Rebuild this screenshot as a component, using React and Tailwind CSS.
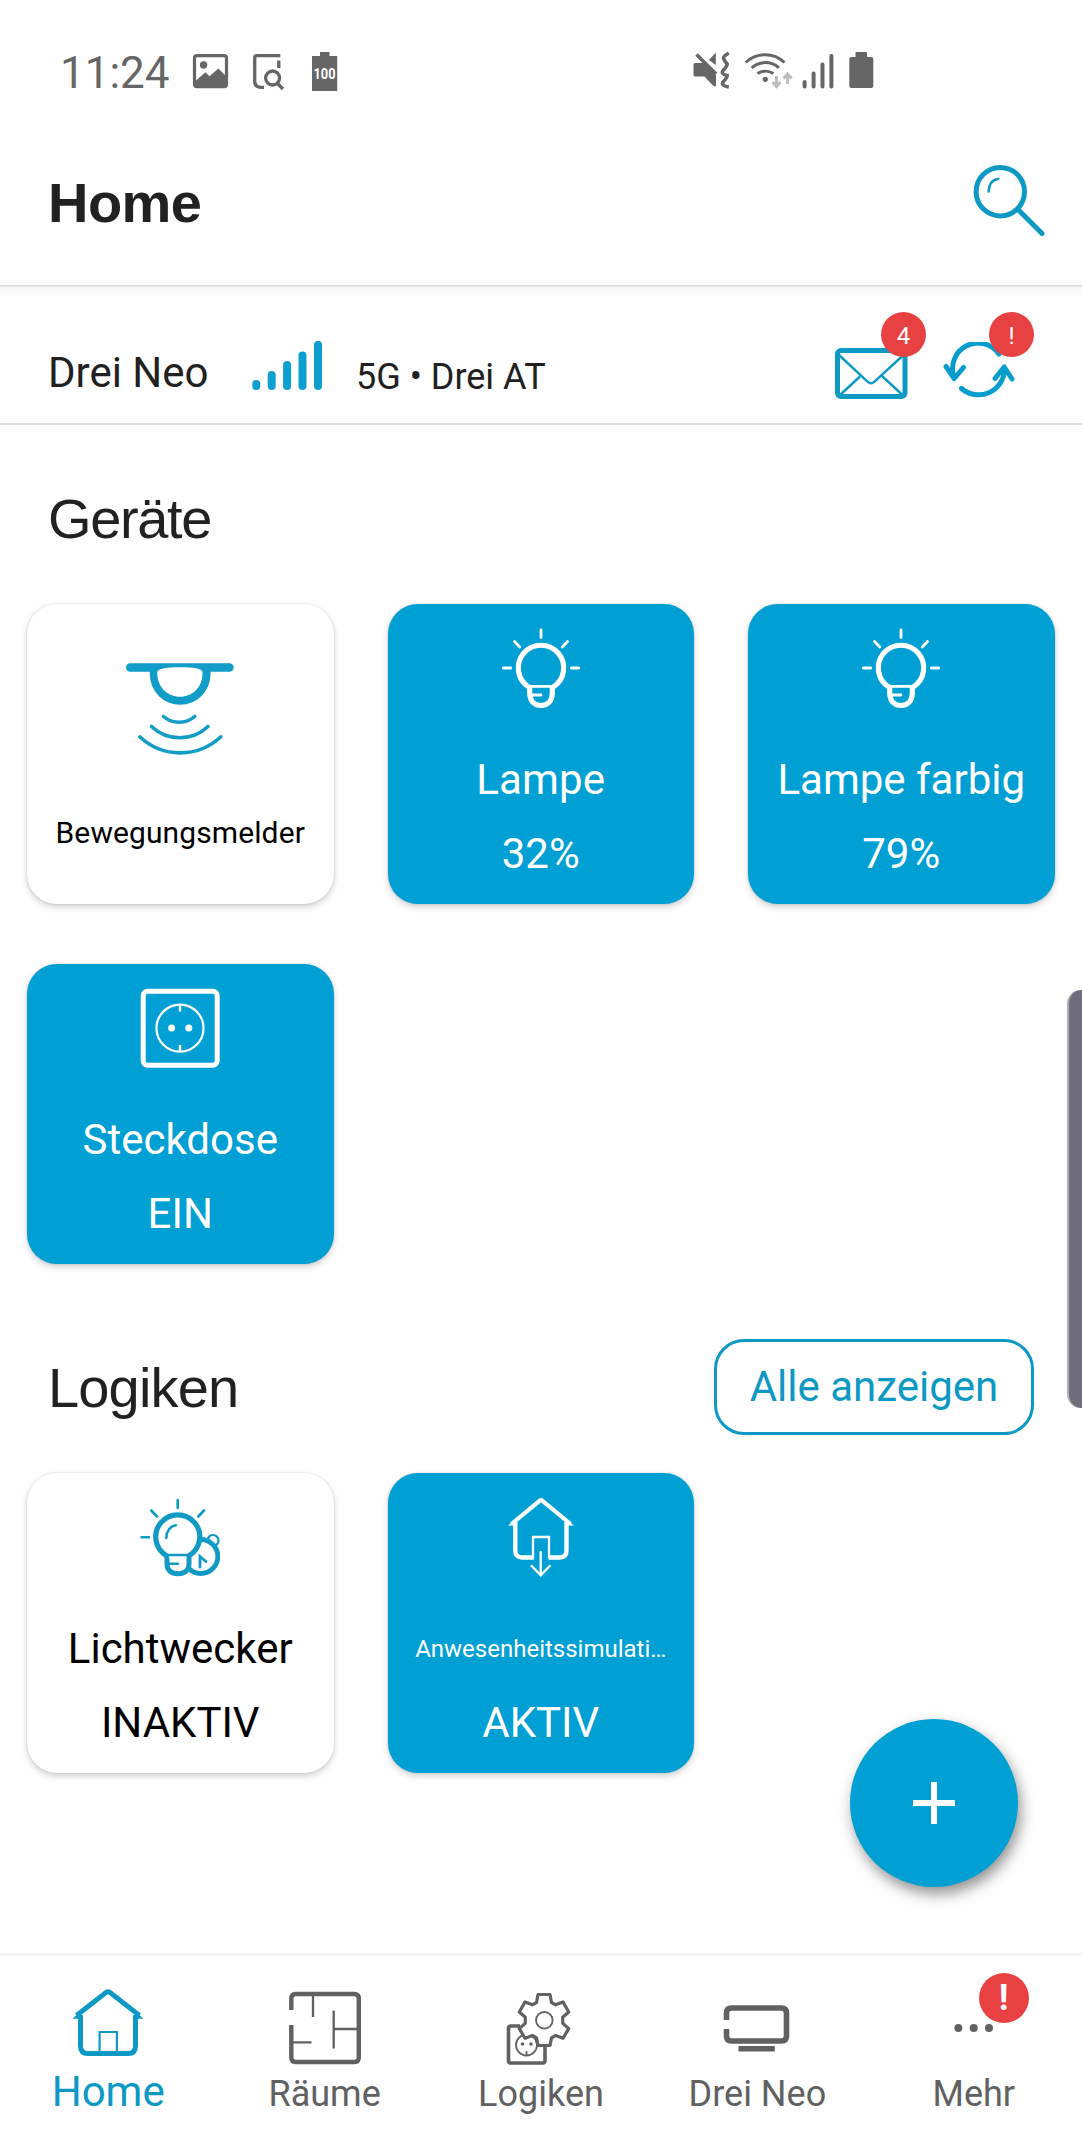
import clsx from 'clsx'

function StatusBar() {
  return (
    <div className="flex h-[142px] shrink-0 items-center pl-[60px] text-[#666]">
      <span className="w-[132px] pt-[4px] text-[44px] leading-[60px]">11:24</span>
      <svg className="mr-[22px] h-10 w-[38px]" viewBox="192 51 38 40">
        <rect x="194.5" y="55.7" width="32" height="31" rx="2.5" fill="none" stroke="currentColor" strokeWidth="3.2" />
        <circle cx="203.6" cy="65" r="3.7" fill="currentColor" />
        <path d="M195 81.5 205.3 72.3 209.5 76.3 218.4 68.5 227 77V87H195z" fill="currentColor" />
      </svg>
      <svg className="mr-[25px] h-10 w-[34px]" viewBox="252 51 34 40" fill="none" stroke="currentColor" strokeWidth="3.3">
        <path d="M280.3 55.6H257q-2.3 0-2.3 2.3V81q0 6.4 6.4 6.4H264" />
        <path d="M278.8 60.5V68M276.5 82.5 283 89" />
        <circle cx="272.6" cy="78" r="7" />
      </svg>
      <svg className="h-[42px] w-7" viewBox="311 50 28 42">
        <path d="M320 52h9.5v4h7.7v35H312V56h8z" fill="currentColor" />
        <text x="313.5" y="79" textLength="22" lengthAdjust="spacingAndGlyphs" fontSize="15" fontWeight="700" fill="#fff">100</text>
      </svg>
      <svg className="ml-[354px] mr-[13px] h-10 w-[38px]" viewBox="693 51 38 40">
        <path d="M695 63h9l12 12v11.5q-2.5 0-4-2L704.5 76.500H695q-1.500 0-1.500-1.500V64.500q0-1.500 1.500-1.500zM709 60l6.800-7.500V65z" fill="currentColor" />
        <path d="M696.500 54.500 716 74M728.800 53q-6 3.500-5.300 5.500t3.700 5.500q0 2-3.700 6t3.700 5.500q0 2-3.700 6t5.300 5.500" fill="none" stroke="currentColor" strokeWidth="3.500" />
      </svg>
      <svg className="mr-[7px] h-10 w-[50px]" viewBox="744 51 50 40" fill="none" stroke="currentColor" strokeWidth="3">
        <path d="M745.700 62.500A28 28 0 0 1 784.500 62.500M751.700 67.800A20.500 20.500 0 0 1 779 67.800M757.500 73.500A14.500 14.500 0 0 1 773.400 73.500" />
        <circle cx="765.300" cy="79.300" r="2.600" fill="currentColor" stroke="none" />
        <path d="M776.500 76v10M772.500 82l4 4.500 4-4.500M787.600 84V74M783.600 78.500l4-4.500 4 4.500" stroke="#bdbdbd" />
      </svg>
      <svg className="mr-[13px] h-10 w-[34px]" viewBox="801 51 34 40" stroke="currentColor" strokeWidth="4" strokeLinecap="round">
        <path d="M804.600 82v4.500M813.600 73.500v13M822.500 64.500v22M831.400 56v30.500" />
      </svg>
      <svg className="h-10 w-[26px]" viewBox="848 51 26 40" fill="currentColor">
        <rect x="855.500" y="52" width="11.500" height="8" rx="1" />
        <rect x="849.300" y="57" width="24" height="31" rx="2" />
      </svg>
    </div>
  )
}

function Header() {
  return (
    <header className="flex h-[143px] shrink-0 items-start justify-between pl-12 pr-[34px]">
      <h1 className="mt-[29px] font-['Liberation_Sans',sans-serif] text-[56px] font-bold leading-[64px] tracking-[-0.01em] text-[#212121]">Home</h1>
      <svg className="mt-5 size-[78px]" viewBox="970 162 78 78" fill="none" stroke="#0d99c4" strokeLinecap="round">
        <circle cx="1000.300" cy="191.700" r="24.200" strokeWidth="5" />
        <path d="M1018.500 210 1042 233.500" strokeWidth="5" />
        <path d="M988.700 191.500q.5-11.500 9.500-12.500" strokeWidth="2.600" />
      </svg>
    </header>
  )
}

function CountBadge({ className, children }) {
  return (
    <span
      className={clsx(
        'absolute right-[-18px] flex size-[45px] items-center justify-center rounded-full bg-[#e84142] pt-0.5 text-[24px] leading-none text-white',
        className
      )}
    >
      {children}
    </span>
  )
}

function DeviceRow() {
  return (
    <section className="flex h-[140px] shrink-0 items-start border-b-2 border-[#dcdcdc] bg-linear-to-b from-[#dedede] from-[1px] via-[#f5f5f5] via-[2px] to-[#fefefe] to-[11px] pl-12 text-[#212121]">
      <span className="mt-[63px] w-[203px] text-[42px] leading-[50px]">Drei Neo</span>
      <svg className="mt-[55px] h-[52px] w-[72px]" viewBox="250 339 72 52" stroke="#0d9fd0" strokeWidth="8" strokeLinecap="round">
        <path d="M255.300 383v2M270.700 374v11M286.100 364v21M301.500 354.500v30.500M317 344v41" />
      </svg>
      <span className="ml-[33px] mt-[67px] w-[478px] text-[36px] leading-[50px]">5G • Drei AT</span>
      <div className="relative mt-[61.5px]">
        <svg className="h-[54px] w-[74px]" viewBox="833.500 346 74 54" fill="none" stroke="#0d99c4">
          <rect x="837" y="349.500" width="67.500" height="46" rx="3.500" strokeWidth="5" />
          <path d="M838.500 354 867 380.500q3.500 3.500 7 0L903 354M839.500 394l20-18.500M902 394l-20.500-19" strokeWidth="2.400" />
        </svg>
        <CountBadge className="-top-[34.500px]">4</CountBadge>
      </div>
      <div className="relative ml-[34px] mt-[57px]">
        <svg className="h-[58px] w-[74px]" viewBox="941.500 342 74 58" fill="none" stroke="#069dce" strokeWidth="5" strokeLinecap="round" strokeLinejoin="round">
          <path d="M998.500 354A25.500 25.500 0 0 0 953.500 377M945.500 366.500 953.700 378.500 963 367.500M961 388.500A26 26 0 0 0 1004 370M994.500 378.500 1003.700 367 1011.500 379" />
        </svg>
        <CountBadge className="-top-[30px]">!</CountBadge>
      </div>
    </section>
  )
}

function MotionIcon() {
  return (
    <svg className="h-[94px] w-[110px]" viewBox="125 662.500 110 94" fill="none" stroke="#119dc8" strokeLinecap="round">
      <path d="M130.200 668H229.500" strokeWidth="8.300" />
      <path d="M149.800 669v6a30.300 30.300 0 0 0 60.700 0v-6z" fill="#119dc8" stroke="none" />
      <path d="M157.300 672.500C158 669 167 667.800 180 667.800s22 1.200 22.500 4.700C203 688 192 697.300 180 697.300S156.800 688 157.300 672.500z" fill="#fff" stroke="none" />
      <path d="M163.500 717a24 24 0 0 0 31.200 0M151.500 727a41 41 0 0 0 56.500 0M139.800 737.300a59 59 0 0 0 81 0" strokeWidth="3.600" />
    </svg>
  )
}

function BulbIcon() {
  return (
    <svg className="size-20" viewBox="-40 0 80 80" fill="none" stroke="#fff" strokeWidth="5.200" strokeLinecap="round">
      <path d="M-11.500 59.500A22.700 22.700 0 1 1 11.500 59.500" />
      <path d="M-11.300 60v5c0 8.500 5 12.500 11.300 12.500s11.300-4 11.300-12.500v-5" />
      <path d="M-12 58.300H12M-11 67H0M0 2v7.500M-26.500 13.500l5.300 5.500M26.500 13.500l-5.300 5.500" strokeWidth="2.800" />
      <path d="M-37.500 40h7M37.500 40h-7" strokeWidth="3.200" />
    </svg>
  )
}

function SocketIcon() {
  return (
    <svg className="size-20" viewBox="0 0 80 80" fill="none" stroke="#fff">
      <rect x="3.200" y="3.200" width="74" height="74" rx="4.500" strokeWidth="5" />
      <circle cx="40" cy="40.200" r="23.500" strokeWidth="2.200" />
      <path d="M40 17v6.500M40 57v6.500" strokeWidth="2.400" />
      <circle cx="31.600" cy="40" r="3.500" fill="#fff" stroke="none" />
      <circle cx="48.800" cy="40" r="3.500" fill="#fff" stroke="none" />
    </svg>
  )
}

function LightAlarmIcon() {
  return (
    <svg className="size-20" viewBox="0 0 80 80" fill="none" stroke="#119ac3" strokeLinecap="round">
      <circle cx="73" cy="43.500" r="5.500" strokeWidth="2.200" />
      <circle cx="60.800" cy="59.500" r="17" fill="#fff" strokeWidth="4.800" />
      <path d="M60 70V59.500l6 5" strokeWidth="2.800" />
      <path d="M27 57.500v9.500c0 6.500 4.500 9.700 11 9.700s11-3.200 11-9.700v-9.500" fill="#fff" strokeWidth="5" />
      <circle cx="37.700" cy="40.300" r="22" fill="#fff" stroke="none" />
      <path d="M26.500 58.700a22 22 0 1 1 22.500 0" strokeWidth="5.200" />
      <path d="M27 58H49M29 66.700h9M26.300 41q.5-11 9.500-12.700M37.700 3v8M11.300 13.500l5.700 6M64 13.500l-5.700 6M1.500 40.300h7.500" strokeWidth="2.600" />
    </svg>
  )
}

function PresenceIcon() {
  return (
    <svg className="size-20" viewBox="0 0 80 80" fill="none" stroke="#fff">
      <path d="M10.500 27 38.500 3.800q1.500-1.200 3 0L69.500 27" strokeWidth="4.200" />
      <path d="M7 28.500 14 23v5.500zM73 28.500 66 23v5.500z" fill="#fff" stroke="none" />
      <path d="M14.300 25v28.500q0 7 7 7h11.500M65.500 25v28.500q0 7-7 7H47.500" strokeWidth="4.400" />
      <path d="M32 61V40h16v21M39.700 54v24M30 68.300l9.700 10 9.700-10" strokeWidth="2.300" />
    </svg>
  )
}

function Tile({ icon, name, state, active, nameClass }) {
  return (
    <div
      className={clsx(
        'flex h-[300px] flex-col items-center rounded-[30px] pt-6 text-[42px] leading-[50px]',
        'shadow-[0_0_2px_rgba(0,0,0,0.14),0_3px_6px_rgba(0,0,0,0.18)]',
        active ? 'bg-[#01a0d4] text-white' : 'bg-white text-black'
      )}
    >
      {icon}
      <span className={clsx('mt-[47px] whitespace-nowrap', nameClass)}>{name}</span>
      <span className="mt-6">{state}</span>
    </div>
  )
}

function NavItem({ label, active, viewBox, children, badge }) {
  return (
    <div className={clsx('relative flex flex-col items-center', active ? 'text-[#0d99c4]' : 'text-[#616161]')}>
      <svg className="h-[86px] w-[100px]" viewBox={viewBox} fill="none" stroke="currentColor">
        {children}
      </svg>
      <span className={clsx('leading-[50px]', active ? 'mt-px text-[42px]' : 'mt-[3px] text-[36px]')}>{label}</span>
      {badge && (
        <span className="absolute -top-[7px] left-[113px] flex size-[50px] items-center justify-center rounded-full bg-[#e84142] text-[36px] font-bold leading-none text-white">
          {badge}
        </span>
      )}
    </div>
  )
}

function BottomNav() {
  return (
    <nav className="mt-auto grid h-[181px] shrink-0 grid-cols-5 border-t-[3px] border-[#f5f5f5] pt-6">
      <NavItem label="Home" active viewBox="58 1980 100 86">
        <path d="M76.500 2015.500 106 1992.500q2-1.500 4 0L139.500 2015.500" strokeWidth="4.800" />
        <path d="M72.300 2018.800 79 2013v5.800zM143.600 2018.800 137 2013v5.800z" fill="currentColor" stroke="none" />
        <path d="M80.500 2015v31q0 7.500 7.500 7.500h40q7.500 0 7.500-7.500v-31" strokeWidth="5" />
        <path d="M99.600 2052v-20h17.300v20" strokeWidth="2.200" />
      </NavItem>
      <NavItem label="Räume" viewBox="274 1980 100 86">
        <path d="M290.300 2010v-11.500q0-4.500 4.500-4.500h58.500q4.500 0 4.500 4.500v59q0 4.500-4.500 4.500h-58.500q-4.500 0-4.500-4.500V2025" strokeWidth="4.400" />
        <path d="M312 1996v21M332.700 2010.500V2048.500M333 2029h23M292 2042.300h18.500" strokeWidth="2.300" />
      </NavItem>
      <NavItem label="Logiken" viewBox="491 1980 100 86">
        <path d="M520 2026h-9q-2.500 0-2.500 2.500v32q0 2.500 2.500 2.500h31.500q2.500 0 2.500-2.500V2045" strokeWidth="3.600" />
        <circle cx="526.500" cy="2045" r="10.500" strokeWidth="1.800" />
        <path d="M526.500 2051v4" strokeWidth="1.800" />
        <circle cx="522.500" cy="2044" r="1.800" fill="currentColor" stroke="none" />
        <circle cx="531" cy="2044" r="1.800" fill="currentColor" stroke="none" />
        <path d="M538 1994.500h12l1.500 8 4 2.300 7.500-2.800 5.700 10-6 5.300v6l6 5.300-5.700 9.700-7.500-2.800-4 2.300-1.500 7.700h-12l-1.500-7.700-4-2.300-7.500 2.800-5.700-9.700 6-5.300v-6l-6-5.300 5.700-10 7.500 2.800 4-2.300z" fill="#fff" strokeWidth="3.200" strokeLinejoin="round" />
        <circle cx="544.300" cy="2020.300" r="8.300" strokeWidth="1.800" />
      </NavItem>
      <NavItem label="Drei Neo" viewBox="707 1980 100 86">
        <path d="M726.500 2020v-7q0-5 5-5h50q5 0 5 5v23q0 5-5 5h-50q-5 0-5-5v-7" strokeWidth="5.600" />
        <path d="M738.500 2048.700h36.300" strokeWidth="5.400" />
      </NavItem>
      <NavItem label="Mehr" viewBox="924 1980 100 86" badge="!">
        <circle cx="958.400" cy="2028" r="4" fill="currentColor" stroke="none" />
        <circle cx="973.700" cy="2028" r="4" fill="currentColor" stroke="none" />
        <circle cx="989" cy="2028" r="4" fill="currentColor" stroke="none" />
      </NavItem>
    </nav>
  )
}

export default function App() {
  const heading = "font-['Liberation_Sans',sans-serif] text-[56px] leading-[64px] text-[#212121]"

  return (
    <div className="relative flex h-[2134px] w-[1082px] flex-col overflow-hidden bg-[#fefefe] font-[Roboto,sans-serif]">
      <StatusBar />
      <Header />
      <DeviceRow />

      <main>
        <h2 className={clsx('ml-12 mt-[62px] tracking-[-0.024em]', heading)}>Geräte</h2>
        <div className="mt-[53px] grid grid-cols-[repeat(3,306.5px)] gap-x-[54px] gap-y-[60px] px-[27px]">
          <Tile
            icon={<div className="mt-[34px]"><MotionIcon /></div>}
            name="Bewegungsmelder"
            nameClass="pt-[5px] text-[30px] tracking-[0.1px]"
          />
          <Tile icon={<BulbIcon />} name="Lampe" nameClass="tracking-[0.2px]" state="32%" active />
          <Tile icon={<BulbIcon />} name="Lampe farbig" state="79%" active />
          <Tile icon={<SocketIcon />} name="Steckdose" state="EIN" active />
        </div>

        <div className="mt-[75px] flex h-24 items-start justify-between px-12">
          <h2 className={clsx('mt-[17px] tracking-[-0.015em]', heading)}>Logiken</h2>
          <button className="h-24 w-80 rounded-[30px] border-[3px] border-[#0d99c4] text-[42px] leading-[50px] text-[#0d99c4]">
            Alle anzeigen
          </button>
        </div>
        <div className="mt-[38px] grid grid-cols-[repeat(3,306.5px)] gap-x-[54px] px-[27px]">
          <Tile icon={<LightAlarmIcon />} name="Lichtwecker" state="INAKTIV" />
          <Tile icon={<PresenceIcon />} name="Anwesenheitssimulati…" nameClass="text-[24px]" state="AKTIV" active />
        </div>
      </main>

      <button className="absolute left-[850px] top-[1719px] flex size-[168px] items-center justify-center rounded-full bg-[#01a0d4] shadow-[3px_7px_14px_rgba(0,0,0,0.42)]">
        <svg className="size-[42px]" viewBox="0 0 42 42" stroke="#fff" strokeWidth="6">
          <path d="M21 0v42M0 21h42" />
        </svg>
      </button>
      <div className="absolute right-0 top-[990px] h-[418px] w-[15px] rounded-l-[14px] border-l-2 border-[#b0afb6] bg-[#706d7d]" />

      <BottomNav />
    </div>
  )
}
